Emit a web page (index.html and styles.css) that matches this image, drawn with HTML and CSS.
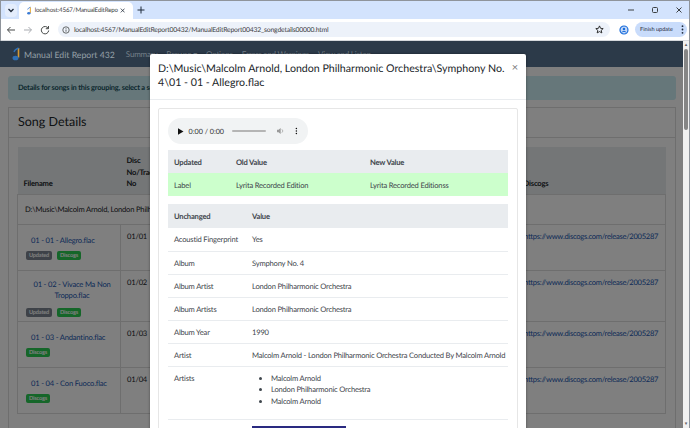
FILE: index.html
```html
<!DOCTYPE html>
<html lang="en">
<head>
    <meta charset="UTF-8">
    <title>Manual Edit Report 432</title>
    <link rel="stylesheet" href="styles.css">
</head>
<body>
    <div class="tabstrip">
        <div class="tab-search">
            <svg width="8" height="8" viewBox="0 0 8 8"><path d="M1.500 3l2.500 2.500L6.500 3" fill="none" stroke="#1f2a3a" stroke-width="1.300"/></svg>
        </div>
        <div class="tab">
            <svg class="favicon" width="10" height="12" viewBox="0 0 10 12"><path d="M7 1v7.500" stroke="#e8a93a" stroke-width="1.400" fill="none"/><path d="M7 1C5 2 4 2.500 3.500 4" stroke="#3a7bd5" stroke-width="1.200" fill="none"/><ellipse cx="5" cy="9" rx="2.200" ry="1.700" fill="#3a7bd5"/></svg>
            <span class="tab-title">localhost:4567/ManualEditRepo</span>
            <svg width="7" height="7" viewBox="0 0 7 7"><path d="M1 1l5 5M6 1L1 6" stroke="#1f2a3a" stroke-width="1"/></svg>
        </div>
        <svg class="new-tab" width="8" height="8" viewBox="0 0 8 8"><path d="M4 .5v7M.5 4h7" stroke="#1f2a3a" stroke-width="1"/></svg>
        <div class="window-btns">
            <svg width="8" height="8" viewBox="0 0 8 8"><path d="M1 4h6" stroke="#3c4043" stroke-width="1"/></svg>
            <svg width="8" height="8" viewBox="0 0 8 8"><rect x="1.500" y="1.500" width="5" height="5" rx="1" fill="none" stroke="#3c4043" stroke-width="1"/></svg>
            <svg width="8" height="8" viewBox="0 0 8 8"><path d="M1.500 1.500l5 5M6.500 1.500l-5 5" stroke="#3c4043" stroke-width="1"/></svg>
        </div>
    </div>

    <div class="toolbar">
        <svg width="10" height="10" viewBox="0 0 10 10"><path d="M9 5H1.500M4.500 2L1.500 5l3 3" fill="none" stroke="#444746" stroke-width="1"/></svg>
        <svg width="10" height="10" viewBox="0 0 10 10"><path d="M1 5h7.500M5.500 2l3 3-3 3" fill="none" stroke="#a8abb0" stroke-width="1"/></svg>
        <svg width="10" height="10" viewBox="0 0 10 10"><path d="M8.300 3.500A3.700 3.700 0 1 0 8.700 5.500M8.500 1v2.700H5.800" fill="none" stroke="#444746" stroke-width="1"/></svg>
        <div class="omnibox">
            <svg width="8" height="8" viewBox="0 0 8 8"><circle cx="4" cy="4" r="3.200" fill="none" stroke="#444746" stroke-width=".8"/><path d="M4 3.500v2.200M4 2.200v.7" stroke="#444746" stroke-width=".8"/></svg>
            <span class="url">localhost:4567/ManualEditReport00432/ManualEditReport00432_songdetails00000.html</span>
            <svg class="star" width="9" height="9" viewBox="0 0 10 10"><path d="M5 1l1.200 2.700 2.900.3-2.200 1.900.7 2.900L5 7.300 2.400 8.800l.7-2.900L.9 4l2.900-.3z" fill="none" stroke="#1f1f1f" stroke-width="1"/></svg>
        </div>
        <svg class="profile" width="10" height="10" viewBox="0 0 10 10"><circle cx="5" cy="5" r="4" fill="#c5d9f7" stroke="#1a6ddb" stroke-width="1.200"/><circle cx="5" cy="4" r="1.300" fill="#1a6ddb"/><path d="M2.800 7.500C3.500 6 6.500 6 7.200 7.500" stroke="#1a6ddb" fill="none"/></svg>
        <div class="update-pill">
            <span>Finish update</span>
            <svg width="3" height="9" viewBox="0 0 3 9"><circle cx="1.500" cy="1.200" r=".9" fill="#1f2a3a"/><circle cx="1.500" cy="4.500" r=".9" fill="#1f2a3a"/><circle cx="1.500" cy="7.800" r=".9" fill="#1f2a3a"/></svg>
        </div>
    </div>

    <div class="viewport">
        <nav class="navbar">
            <svg class="brand-icon" width="13" height="16" viewBox="0 0 13 16"><path d="M9.500 2v9.500" stroke="#d69a35" stroke-width="1.600" fill="none"/><path d="M9.500 2C7 3 5.500 4 5 6" stroke="#2f6fb5" stroke-width="1.400" fill="none"/><ellipse cx="6.500" cy="12" rx="3" ry="2.300" fill="#2f6fb5"/></svg>
            <span class="brand">Manual Edit Report 432</span>
            <span class="nav-link">Summary</span>
            <span class="nav-link">Browse ▾</span>
            <span class="nav-link">Options</span>
            <span class="nav-link">Errors and Warnings</span>
            <span class="nav-link">View and Listen</span>
        </nav>

        <div class="page">
            <div class="alert">Details for songs in this grouping, select a song to see the changes made to it</div>
            <div class="card">
                <h2 class="card-title">Song Details</h2>
                <div class="card-body">
                    <table class="songs">
                        <thead>
                            <tr>
                                <th class="col-file">Filename</th>
                                <th class="col-disc">Disc No/Track No</th>
                                <th class="col-gap"></th>
                                <th class="col-discogs">Discogs</th>
                            </tr>
                        </thead>
                        <tbody>
                            <tr class="group-row">
                                <td colspan="4">D:\Music\Malcolm Arnold, London Philharmonic Orchestra\Symphony No. 4</td>
                            </tr>
                            <tr class="song-row">
                                <td class="file-cell">
                                    <a class="song-link">01 - 01 - Allegro.flac</a>
                                    <div class="badges"><span class="badge updated">Updated</span><span class="badge discogs">Discogs</span></div>
                                </td>
                                <td>01/01</td>
                                <td></td>
                                <td><a class="release">https://www.discogs.com/release/2005287</a></td>
                            </tr>
                            <tr class="song-row tall">
                                <td class="file-cell center">
                                    <a class="song-link">01 - 02 - Vivace Ma Non Troppo.flac</a>
                                    <div class="badges"><span class="badge updated">Updated</span><span class="badge discogs">Discogs</span></div>
                                </td>
                                <td>01/02</td>
                                <td></td>
                                <td><a class="release">https://www.discogs.com/release/2005287</a></td>
                            </tr>
                            <tr class="song-row">
                                <td class="file-cell">
                                    <a class="song-link">01 - 03 - Andantino.flac</a>
                                    <div class="badges"><span class="badge discogs">Discogs</span></div>
                                </td>
                                <td>01/03</td>
                                <td></td>
                                <td><a class="release">https://www.discogs.com/release/2005287</a></td>
                            </tr>
                            <tr class="song-row">
                                <td class="file-cell">
                                    <a class="song-link">01 - 04 - Con Fuoco.flac</a>
                                    <div class="badges"><span class="badge discogs">Discogs</span></div>
                                </td>
                                <td>01/04</td>
                                <td></td>
                                <td><a class="release">https://www.discogs.com/release/2005287</a></td>
                            </tr>
                        </tbody>
                    </table>
                </div>
            </div>
            <div class="backdrop"></div>
        </div>

        <div class="modal">
            <div class="modal-header">
                <h3 class="modal-title">D:\Music\Malcolm Arnold, London Philharmonic Orchestra\Symphony No. 4\01 - 01 - Allegro.flac</h3>
                <span class="modal-close">×</span>
            </div>
            <div class="modal-body">
                <div class="inner-card">
                    <div class="player">
                        <svg width="6" height="7" viewBox="0 0 6 7"><path d="M0 0l6 3.500L0 7z" fill="#111"/></svg>
                        <span class="time">0:00 / 0:00</span>
                        <span class="track"></span>
                        <svg width="8" height="8" viewBox="0 0 8 8"><path d="M0 2.700h1.700L4 .8v6.400L1.700 5.300H0z" fill="#9a9a9a"/><path d="M5.300 2.200a2.200 2.200 0 0 1 0 3.600" stroke="#9a9a9a" fill="none" stroke-width=".8"/></svg>
                        <svg class="player-more" width="3" height="8" viewBox="0 0 3 8"><circle cx="1.500" cy="1.200" r=".8" fill="#111"/><circle cx="1.500" cy="4" r=".8" fill="#111"/><circle cx="1.500" cy="6.800" r=".8" fill="#111"/></svg>
                    </div>
                    <table class="tags updated-tags">
                        <thead>
                            <tr><th class="tag-name">Updated</th><th class="old-val">Old Value</th><th>New Value</th></tr>
                        </thead>
                        <tbody>
                            <tr class="changed"><td>Label</td><td>Lyrita Recorded Edition</td><td>Lyrita Recorded Editionss</td></tr>
                        </tbody>
                    </table>
                    <table class="tags unchanged-tags">
                        <thead>
                            <tr><th class="unch-name">Unchanged</th><th>Value</th></tr>
                        </thead>
                        <tbody>
                            <tr><td>Acoustid Fingerprint</td><td>Yes</td></tr>
                            <tr><td>Album</td><td>Symphony No. 4</td></tr>
                            <tr><td>Album Artist</td><td>London Philharmonic Orchestra</td></tr>
                            <tr><td>Album Artists</td><td>London Philharmonic Orchestra</td></tr>
                            <tr><td>Album Year</td><td>1990</td></tr>
                            <tr><td>Artist</td><td>Malcolm Arnold - London Philharmonic Orchestra Conducted By Malcolm Arnold</td></tr>
                            <tr>
                                <td>Artists</td>
                                <td>
                                    <ul class="artist-list">
                                        <li>Malcolm Arnold</li>
                                        <li>London Philharmonic Orchestra</li>
                                        <li>Malcolm Arnold</li>
                                    </ul>
                                </td>
                            </tr>
                        </tbody>
                    </table>
                    <div class="modal-action"><button class="edit-btn" aria-label="Edit"></button></div>
                </div>
            </div>
        </div>

        <div class="scrollbar">
            <span class="scroll-arrow">▴</span>
            <span class="scroll-thumb"></span>
            <span class="scroll-space"></span>
            <span class="scroll-arrow">▾</span>
        </div>
    </div>
</body>
</html>
```

FILE: styles.css
```css
* {
    box-sizing: border-box;
}
html, body {
    height: 100%;
}
body {
    margin: 0;
    width: 690px;
    height: 428px;
    overflow: hidden;
    display: flex;
    flex-direction: column;
    font-family: Lato, Arial, sans-serif;
    font-size: 7.600px;
    letter-spacing: -0.2px;
    text-rendering: geometricPrecision;
    color: #212529;
    background: #fff;
    outline: 1px solid #8f949b;
    outline-offset: -1px;
}

/* browser chrome */
.tabstrip {
    height: 19px;
    flex: none;
    display: flex;
    align-items: center;
    padding: 1px 0 0 5px;
    background: #d3e3fd;
}
.tab-search {
    width: 12px;
    height: 13px;
    border-radius: 4px;
    background: #e4edfc;
    display: flex;
    align-items: center;
    justify-content: center;
}
.tab {
    width: 114px;
    height: 17px;
    margin: 1px 0 0 2px;
    padding: 0 8px 0 6px;
    display: flex;
    align-items: center;
    gap: 2px;
    background: #fff;
    border-radius: 5px 5px 0 0;
}
.tab-title {
    width: 79px;
    flex: none;
    margin-right: 4px;
    white-space: nowrap;
    font-size: 6.200px;
    letter-spacing: -0.15px;
    color: #3c4043;
}
.new-tab {
    margin-left: 4px;
}
.window-btns {
    margin-left: auto;
    width: 56px;
    margin-right: 7px;
    display: flex;
    justify-content: space-between;
}

.toolbar {
    height: 22px;
    flex: none;
    display: flex;
    align-items: center;
    gap: 7px;
    padding: 0 3px 0 6px;
    background: #fff;
    border-bottom: 1px solid #d5d8dc;
}
.omnibox {
    width: 554px;
    margin-left: 1px;
    height: 15px;
    padding: 0 6px 0 4px;
    display: flex;
    align-items: center;
    gap: 4px;
    background: #edf2fa;
    border-radius: 8px;
}
.url {
    flex: 1;
    font-size: 6.800px;
    letter-spacing: -0.18px;
    color: #3c4043;
}
.profile {
    margin-left: 2px;
}
.update-pill {
    height: 15px;
    width: 52px;
    flex: none;
    margin-left: -1px;
    padding: 0 3px 0 5px;
    display: flex;
    align-items: center;
    justify-content: space-between;
    white-space: nowrap;
    border-radius: 8px;
    background: #c9dcfb;
    font-size: 5.600px;
    letter-spacing: 0;
    color: #1f2a3a;
}

/* report page */
.viewport {
    position: relative;
    flex: 1;
    min-height: 0;
    display: flex;
    flex-direction: column;
    overflow: hidden;
    padding-right: 7px;
}
.navbar {
    height: 26px;
    flex: none;
    display: flex;
    align-items: center;
    gap: 9px;
    padding-left: 9px;
    background: #2c3a49;
    color: #75808a;
    font-size: 8px;
}
.brand-icon {
    margin-right: -7px;
}
.brand {
    font-size: 8.700px;
    letter-spacing: 0;
    color: #96a0a8;
    margin-right: 2px;
}
.page {
    position: relative;
    flex: 1;
    padding: 9px 7px 0 8px;
    background: #fff;
}
.backdrop {
    position: absolute;
    top: 0;
    left: 0;
    right: 0;
    bottom: 0;
    background: rgba(0,0,0,0.5);
}
.alert {
    height: 24px;
    line-height: 24px;
    padding-left: 10px;
    margin-bottom: 7px;
    background: #cdeef5;
    border-radius: 3px;
    font-size: 7.400px;
    font-weight: 700;
    color: #17505c;
}
.card {
    border: 1px solid #dcdcdc;
    height: 330px;
}
.card-title {
    margin: 0;
    height: 30px;
    line-height: 27px;
    padding-left: 9px;
    font-size: 12.500px;
    letter-spacing: 0;
    font-weight: 400;
    border-bottom: 1px solid #dcdcdc;
}
.card-body {
    padding: 9px 8px 0;
}
.songs {
    width: 649px;
    table-layout: fixed;
    border-collapse: collapse;
    line-height: 11.500px;
}
.songs th {
    height: 47px;
    padding: 0 6px 4px;
    background: #e9ecef;
    text-align: left;
    vertical-align: bottom;
    font-weight: 700;
}
.songs .col-file { width: 103px; }
.songs .col-disc { width: 40px; padding-right: 0; }
.songs .col-gap { width: 363px; }
.songs td {
    padding: 6px;
    vertical-align: top;
    border: 1px solid #dcdcdc;
}
.songs .col-discogs { padding-left: 0; }
.songs td:last-child {
    padding-left: 0;
    white-space: nowrap;
}
.songs .group-row td {
    height: 30px;
    padding: 9px 0 0 7px;
    white-space: nowrap;
    overflow: hidden;
}
.song-row td {
    height: 46px;
}
.song-row.tall td {
    height: 51px;
}
.songs .song-row .file-cell {
    padding: 10px 2px 0 13px;
}
.songs .song-row .file-cell.center {
    padding-top: 8px;
    padding-left: 8px;
    text-align: center;
}
.song-link {
    color: #1a56b0;
}
.release {
    letter-spacing: -0.28px;
    color: #1a56b0;
}
.badges {
    display: flex;
    gap: 5px;
    margin: 5px 0 0 -5px;
}
.center .badges {
    margin: 6px 0 0;
}
.badge {
    padding: 1px 3px;
    height: 9px;
    line-height: 7px;
    border-radius: 2px;
    font-size: 5.600px;
    font-weight: 700;
    color: #fff;
}
.updated { background: #7c8591; }
.discogs { background: #2acc52; }

/* song dialog */
.modal {
    position: absolute;
    top: 13px;
    left: 150px;
    width: 376px;
    background: #fff;
    border-radius: 2px;
    box-shadow: 0 0 3px rgba(0,0,0,0.4);
}
.modal-header {
    display: flex;
    justify-content: space-between;
    height: 46px;
    padding: 8px 8px 0;
    border-bottom: 1px solid #e9ecef;
}
.modal-title {
    margin: 0;
    width: 350px;
    font-size: 10.650px;
    letter-spacing: 0;
    font-weight: 400;
    line-height: 14px;
}
.modal-close {
    font-size: 11px;
    line-height: 12px;
    color: #777;
}
.modal-body {
    padding: 8px;
}
.inner-card {
    padding: 9px 9px 0;
    border: 1px solid #e6e6e6;
    border-radius: 2px;
}
.player {
    width: 140px;
    height: 26px;
    padding: 0 10px;
    display: flex;
    align-items: center;
    background: #f1f3f4;
    border-radius: 13px;
    margin-bottom: 6px;
    letter-spacing: 0;
}
.time {
    margin-left: 5px;
    font-size: 7.200px;
    color: #333;
    white-space: nowrap;
}
.track {
    width: 37px;
    height: 2px;
    margin: 0 11px 0 8px;
    background: #b5b5b5;
    border-radius: 1px;
}
.player-more {
    margin-left: 11px;
}
.tags {
    width: 340px;
    border-collapse: collapse;
    table-layout: fixed;
    color: #3f464d;
}
.tags th {
    height: 23px;
    padding: 0 6px;
    background: #e9ecef;
    text-align: left;
    font-weight: 700;
}
.tags td {
    height: 23px;
    padding: 0 6px;
    border-bottom: 1px solid #e9ecef;
    white-space: nowrap;
}
.tag-name { width: 62px; }
.old-val { width: 134px; }
.unch-name { width: 78px; }
.changed td {
    background: #ccffcc;
    border-bottom: none;
}
.updated-tags {
    margin-bottom: 8px;
}
.unchanged-tags th {
    height: 24px;
}
.unchanged-tags tr:last-child td {
    vertical-align: top;
    padding-top: 6px;
    height: 53px;
}
.artist-list {
    margin: 0;
    padding-left: 19px;
    line-height: 11.500px;
}
.modal-action {
    padding: 6px 0 0 84px;
}
.edit-btn {
    display: block;
    width: 94px;
    height: 22px;
    border: none;
    background: #2a2a80;
}

.scrollbar {
    position: absolute;
    top: 0;
    right: 1px;
    bottom: 0;
    width: 6px;
    display: flex;
    flex-direction: column;
    align-items: center;
    background: #f1f1f1;
    font-size: 5px;
    line-height: 8px;
    color: #606060;
}
.scroll-thumb {
    width: 4px;
    height: 81px;
    background: #868686;
    border-radius: 2px;
}
.scroll-space {
    flex: 1;
}
```
